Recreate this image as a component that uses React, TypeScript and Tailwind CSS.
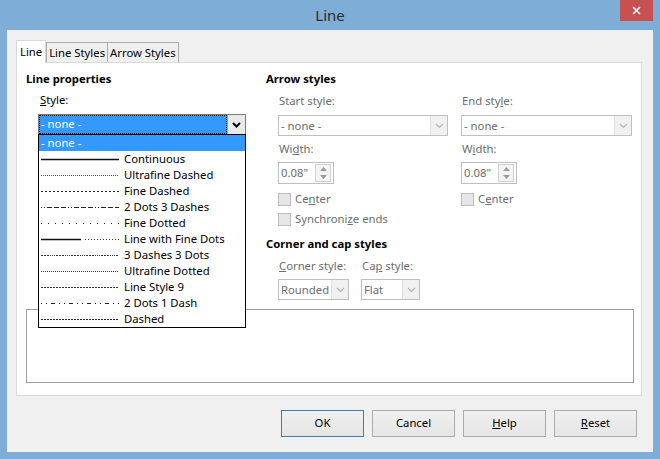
import React from "react";

type Sample = { name: string; dash?: string; width?: number; color?: string; split?: boolean };

const samples: Sample[] = [
  { name: "Continuous", width: 1.6, color: "#111" },
  { name: "Ultrafine Dashed", dash: "1 1", width: 1, color: "#555" },
  { name: "Fine Dashed", dash: "2 2", width: 1, color: "#222" },
  { name: "2 Dots 3 Dashes", dash: "1 2 1 2 5 2 5 2 5 2", width: 1, color: "#222" },
  { name: "Fine Dotted", dash: "1 6", width: 1, color: "#222" },
  { name: "Line with Fine Dots", split: true },
  { name: "3 Dashes 3 Dots", dash: "2 1 2 1 2 1 1 1 1 1 1 1", width: 1, color: "#333" },
  { name: "Ultrafine Dotted", dash: "1 1", width: 1, color: "#333" },
  { name: "Line Style 9", dash: "2 1", width: 1, color: "#333" },
  { name: "2 Dots 1 Dash", dash: "1 4 1 4 4 4", width: 1, color: "#222" },
  { name: "Dashed", dash: "2 1", width: 1, color: "#222" },
];

function LineSample({ s }: { s: Sample }) {
  return (
    <svg width="78" height="16" className="shrink-0">
      {s.split ? (
        <>
          <line x1="0" y1="8.5" x2="40" y2="8.5" stroke="#111" strokeWidth="1.6" />
          <line x1="44" y1="8.5" x2="78" y2="8.5" stroke="#333" strokeWidth="1" strokeDasharray="1 2" />
        </>
      ) : (
        <line x1="0" y1="8.5" x2="78" y2="8.5" stroke={s.color} strokeWidth={s.width} strokeDasharray={s.dash} />
      )}
    </svg>
  );
}

function Chevron({ dark }: { dark?: boolean }) {
  return (
    <svg width="9" height="6" viewBox="0 0 9 6">
      <path
        d="M1 1 L4.5 4.5 L8 1"
        fill="none"
        stroke={dark ? "#000" : "#b5b5b5"}
        strokeWidth={dark ? 2 : 1.2}
      />
    </svg>
  );
}

function DisabledSelect({ value, w }: { value: string; w: string }) {
  return (
    <div className={`${w} h-[21px] border border-[#bfbfbf] bg-white flex items-center`}>
      <span className="flex-1 pl-[2px] text-[#6d6d6d] leading-none">{value}</span>
      <div className="w-[17px] h-[19px] bg-[#f0f0f0] border-l border-[#e0e0e0] flex items-center justify-center">
        <Chevron />
      </div>
    </div>
  );
}

function Spinner() {
  return (
    <div className="w-[56px] h-[22px] border border-[#bfbfbf] bg-white flex items-center">
      <span className="flex-1 pl-[2px] text-[#6d6d6d]">0.08"</span>
      <div className="w-[16px] h-[18px] mr-[2px] border border-[#d0d0d0] bg-[#f4f4f4] flex flex-col items-center justify-around">
        <svg width="7" height="4"><path d="M0 4 L3.5 0 L7 4 Z" fill="#9a9a9a" /></svg>
        <svg width="7" height="4"><path d="M0 0 L3.5 4 L7 0 Z" fill="#9a9a9a" /></svg>
      </div>
    </div>
  );
}

function Check({ label }: { label: React.ReactNode }) {
  return (
    <div className="flex items-center h-[16px] gap-[4px]">
      <div className="w-[13px] h-[13px] border border-[#bcbcbc] bg-[#e6e6e6]" />
      <span className="text-[#6d6d6d]">{label}</span>
    </div>
  );
}

function Btn({ children, def }: { children: React.ReactNode; def?: boolean }) {
  return (
    <button
      className={`w-[83px] h-[27px] border ${def ? "border-[#3c7fb1]" : "border-[#acacac]"} bg-gradient-to-b from-[#f0f0f0] to-[#e5e5e5] text-[#000]`}
    >
      {children}
    </button>
  );
}

export default function App() {
  return (
    <div
      className="w-[660px] h-[459px] bg-[#7eaed8] flex flex-col text-[11.3px] text-black"
      style={{ fontFamily: "'Noto Sans', 'Open Sans', sans-serif" }}
    >
      <div className="relative h-[30px] flex items-center justify-center">
        <span className="text-[15px] text-[#2b2b2b]">Line</span>
        <div className="absolute top-0 right-[7px] w-[33px] h-[21px] bg-[#c75050] flex items-center justify-center">
          <svg width="9" height="9" viewBox="0 0 9 9">
            <path d="M1 1 L8 8 M8 1 L1 8" stroke="#fff" strokeWidth="1.6" />
          </svg>
        </div>
      </div>

      <div className="flex-1 mx-[7px] mb-[7px] bg-[#f0f0f0] flex flex-col pt-[10px] pl-[9px] pr-[11px]">
        {/* tabs */}
        <div className="flex items-end h-[22px] leading-none">
          <div className="h-[23px] -mb-[1px] relative z-10 bg-white border border-b-0 border-[#d9d9d9] px-[3px] flex items-center">
            Line
          </div>
          <div className="h-[20px] border border-b-0 border-[#acacac] bg-[#f0f0f0] px-[2px] flex items-center">
            Line Styles
          </div>
          <div className="h-[20px] border border-b-0 border-l-0 border-[#acacac] bg-[#f0f0f0] px-[2px] flex items-center">
            Arrow Styles
          </div>
        </div>

        {/* panel */}
        <div className="h-[334px] bg-white border border-[#d9d9d9] px-[9px] pt-[8px] flex flex-col">
          <div className="flex h-[230px]">
            <div className="w-[241px] relative">
              <div className="font-bold h-[16px] leading-[16px]">Line properties</div>
              <div className="ml-[14px] mt-[5px] h-[16px] leading-[16px]">
                <u>S</u>tyle:
              </div>
              <div className="ml-[12px] mt-[6px] w-[208px] h-[21px] border border-[#7a7a7a] flex items-center bg-white">
                <div className="flex-1 h-[19px] bg-[#3399ff] text-white border border-dotted border-[#222] flex items-center pl-[1px]">
                  - none -
                </div>
                <div className="w-[18px] h-[19px] bg-[#e9e9e9] border-l border-[#a0a0a0] flex items-center justify-center">
                  <Chevron dark />
                </div>
              </div>
              <div className="absolute z-20 left-[12px] top-[63px] w-[208px] border border-black bg-white">
                <div className="h-[16px] bg-[#3399ff] text-white pl-[2px] leading-[16px]">- none -</div>
                {samples.map((s) => (
                  <div key={s.name} className="h-[16px] flex items-center pl-[2px] gap-[5px] leading-[16px]">
                    <LineSample s={s} />
                    <span>{s.name}</span>
                  </div>
                ))}
              </div>
            </div>

            <div className="flex-1">
              <div className="font-bold h-[16px] leading-[16px]">Arrow styles</div>
              <div className="flex ml-[12px] gap-[13px]">
                <div className="w-[170px] flex flex-col">
                  <div className="mt-[6px] h-[16px] leading-[16px] text-[#6d6d6d] pl-[1px]">Start style:</div>
                  <div className="mt-[6px]">
                    <DisabledSelect value="- none -" w="w-[170px]" />
                  </div>
                  <div className="mt-[5px] h-[16px] leading-[16px] text-[#6d6d6d] pl-[1px]">
                    Wi<u>d</u>th:
                  </div>
                  <div className="mt-[5px]">
                    <Spinner />
                  </div>
                  <div className="mt-[7px]">
                    <Check label={<>Ce<u>n</u>ter</>} />
                  </div>
                  <div className="mt-[4px]">
                    <Check label={<>Synchroni<u>z</u>e ends</>} />
                  </div>
                </div>
                <div className="w-[171px] flex flex-col">
                  <div className="mt-[6px] h-[16px] leading-[16px] text-[#6d6d6d] pl-[1px]">
                    End sty<u>l</u>e:
                  </div>
                  <div className="mt-[6px]">
                    <DisabledSelect value="- none -" w="w-[171px]" />
                  </div>
                  <div className="mt-[5px] h-[16px] leading-[16px] text-[#6d6d6d] pl-[1px]">
                    W<u>i</u>dth:
                  </div>
                  <div className="mt-[5px]">
                    <Spinner />
                  </div>
                  <div className="mt-[7px]">
                    <Check label={<>C<u>e</u>nter</>} />
                  </div>
                </div>
              </div>

              <div className="font-bold h-[16px] leading-[16px] mt-[9px]">Corner and cap styles</div>
              <div className="flex ml-[12px] gap-[12px]">
                <div className="flex flex-col">
                  <div className="mt-[6px] h-[16px] leading-[16px] text-[#6d6d6d] pl-[1px]">
                    <u>C</u>orner style:
                  </div>
                  <div className="mt-[5px]">
                    <DisabledSelect value="Rounded" w="w-[71px]" />
                  </div>
                </div>
                <div className="flex flex-col">
                  <div className="mt-[6px] h-[16px] leading-[16px] text-[#6d6d6d] pl-[1px]">
                    Ca<u>p</u> style:
                  </div>
                  <div className="mt-[5px]">
                    <DisabledSelect value="Flat" w="w-[59px]" />
                  </div>
                </div>
              </div>
            </div>
          </div>

          <div className="mt-[8px] w-[608px] h-[74px] border border-[#a0a0a0] bg-white" />
        </div>

        {/* buttons */}
        <div className="flex justify-end gap-[8px] mt-[14px] pr-[5px]">
          <Btn def>OK</Btn>
          <Btn>Cancel</Btn>
          <Btn>
            <u>H</u>elp
          </Btn>
          <Btn>
            <u>R</u>eset
          </Btn>
        </div>
      </div>
    </div>
  );
}
